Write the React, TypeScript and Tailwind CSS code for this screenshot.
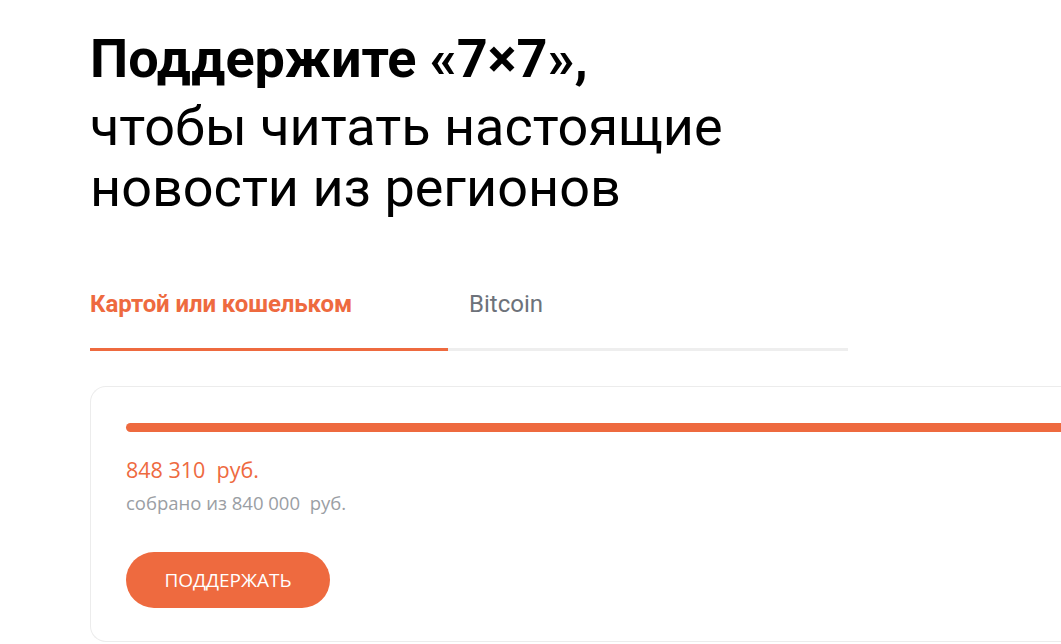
import React from 'react';

const ORANGE = '#ee6a3f';
const openSans = { fontFamily: '"Open Sans", sans-serif' };

function Tabs() {
  return (
    <div className="w-[758px]">
      <div className="flex">
        <div className="w-[379px] pb-[32px] text-[24px] font-bold leading-[24px] text-[#ee6a3f] tracking-[-0.1px]">
          Картой или кошельком
        </div>
        <div className="w-[379px] pb-[32px] text-[24px] leading-[24px] text-[#6d727a]">
          Bitcoin
        </div>
      </div>
      <div className="flex h-[3px] bg-[#eeeeee]">
        <div className="w-[358px] bg-[#ee6a3f]" />
      </div>
    </div>
  );
}

function DonationCard() {
  return (
    <div className="mt-[35px] rounded-l-[16px] border border-r-0 border-[#ececec] pt-[36px] pl-[35px] pb-[33px]">
      <div className="h-[9px] rounded-l-full bg-[#ee6a3f]" />
      <div className="mt-[24px] text-[21.5px] leading-[28px] text-[#ee6a3f]" style={openSans}>
        848 310&nbsp; руб.
      </div>
      <div className="mt-[8px] text-[18.5px] leading-[22px] text-[#9a9ea4]" style={openSans}>
        собрано из 840 000&nbsp; руб.
      </div>
      <button
        className="mt-[38px] flex h-[56px] w-[204px] items-center justify-center rounded-full text-[19px] text-white uppercase"
        style={{ ...openSans, backgroundColor: ORANGE }}
      >
        Поддержать
      </button>
    </div>
  );
}

export default function App() {
  return (
    <div className="h-[644px] w-full overflow-hidden bg-white font-['Roboto',sans-serif] text-black">
      <div className="pl-[90px] pt-[28px]">
        <h1 className="text-[54px] leading-[61px]">
          <span className="block font-bold">Поддержите «7×7»,</span>
          <span className="mt-[7px] block font-normal">
            чтобы читать настоящие
            <br />
            новости из регионов
          </span>
        </h1>
        <div className="mt-[74px]">
          <Tabs />
        </div>
        <DonationCard />
      </div>
    </div>
  );
}
